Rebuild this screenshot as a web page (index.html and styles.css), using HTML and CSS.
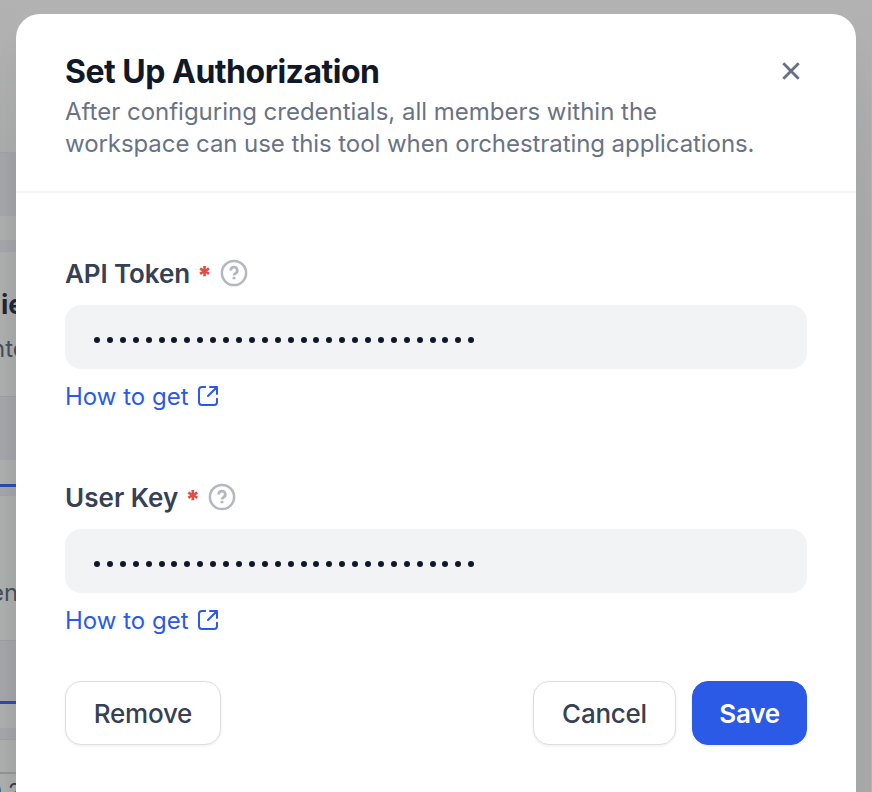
FILE: index.html
```html
<!DOCTYPE html>
<html lang="en">
<head>
<meta charset="utf-8">
<title>Set Up Authorization</title>
<link rel="stylesheet" href="styles.css">
</head>
<body>
<svg class="defs" aria-hidden="true">
  <symbol id="help" viewBox="0 0 28 28"><circle cx="14" cy="14" r="12.1" fill="none" stroke="currentColor" stroke-width="2.5"/><path d="M10.7 11.4a3.3 3.3 0 1 1 4.9 2.9c-1.100.6-1.600 1.100-1.600 2.100" fill="none" stroke="currentColor" stroke-width="2.700"/><rect x="12.6" y="17.8" width="2.8" height="2.5" fill="currentColor"/></symbol>
  <symbol id="external" viewBox="0 0 22 22"><path d="M8.2 2H5A3 3 0 0 0 2 5V17A3 3 0 0 0 5 20H17A3 3 0 0 0 20 17V13.800M13 2H20V9M20 2L11 11" fill="none" stroke="currentColor" stroke-width="2" stroke-linecap="round" stroke-linejoin="round"/></symbol>
</svg>
<div class="page">
  <div class="backdrop">
    <div class="tile head"></div>
    <div class="gap g64"></div>
    <div class="tile t24"></div>
    <div class="gap g11"></div>
    <div class="tile card"><b class="name">ie</b><span class="note">nte</span></div>
    <div class="gap g64"></div>
    <div class="tile t24"></div>
    <div class="rule"></div>
    <div class="gap g8"></div>
    <div class="tile card"><span class="note low">en</span></div>
    <div class="gap g61"></div>
    <div class="rule"></div>
    <div class="tile t24"></div>
    <div class="gap g11"></div>
    <div class="tile last"><span class="count">0 2</span></div>
  </div>
  <main class="modal">
    <header class="header">
      <div class="heading">
        <h1><span>Set Up Authorization</span></h1>
        <p><span class="l1">After configuring credentials, all members within the</span><br><span class="l2">workspace can use this tool when orchestrating applications.</span></p>
      </div>
      <button class="close" aria-label="Close"><svg viewBox="0 0 18 18"><path d="M1.300 1.300L16.700 16.700M16.700 1.300L1.300 16.700" stroke="currentColor" stroke-width="2.800"/></svg></button>
    </header>
    <div class="content">
      <section class="field">
        <div class="label"><span class="api">API Token</span><span class="star">*</span><svg class="help"><use href="#help"/></svg></div>
        <div class="input"><i></i><i></i><i></i><i></i><i></i><i></i><i></i><i></i><i></i><i></i><i></i><i></i><i></i><i></i><i></i><i></i><i></i><i></i><i></i><i></i><i></i><i></i><i></i><i></i><i></i><i></i><i></i><i></i><i></i><i></i></div>
        <a class="link"><span>How to get</span><svg><use href="#external"/></svg></a>
      </section>
      <section class="field">
        <div class="label"><span class="key">User Key</span><span class="star">*</span><svg class="help"><use href="#help"/></svg></div>
        <div class="input"><i></i><i></i><i></i><i></i><i></i><i></i><i></i><i></i><i></i><i></i><i></i><i></i><i></i><i></i><i></i><i></i><i></i><i></i><i></i><i></i><i></i><i></i><i></i><i></i><i></i><i></i><i></i><i></i><i></i><i></i></div>
        <a class="link"><span>How to get</span><svg><use href="#external"/></svg></a>
      </section>
      <footer class="actions">
        <button class="btn remove">Remove</button>
        <button class="btn cancel">Cancel</button>
        <button class="btn save">Save</button>
      </footer>
    </div>
  </main>
</div>
</body>
</html>
```
FILE: styles.css
```css
* { box-sizing: border-box; }
body { margin: 0; font-family: Inter, "Liberation Sans", sans-serif; overflow: hidden; }
.defs { display: none; }
.page { position: relative; width: 872px; height: 792px; overflow: hidden; background: linear-gradient(#b2b2b2 0, #b1b1b1 50px, #abacad 130px, #a8aaa9 240px, #a8aaa9 100%); border-right: 1px solid #b3b2b1; }
.backdrop { width: 16px; height: 792px; overflow: hidden; display: flex; flex-direction: column; }
.backdrop > * { flex: none; }
.tile { background: linear-gradient(90deg, #adaeae, #a5a7a6); white-space: nowrap; }
.head { height: 153px; background: linear-gradient(#b2b2b2 0, #b0b0b0 50px, #a9aaaa 152px); border-bottom: 1px solid #9fa0a2; }
.gap { background: linear-gradient(90deg, #a4a6ab, #9d9fa2); }
.g64 { height: 63px; }
.g61 { height: 60px; }
.g11 { height: 11px; }
.g8 { height: 8px; }
.t24 { height: 24px; }
.rule { height: 3px; background: #294ab0; }
.card { height: 146px; border-top: 1px solid #a0a1a3; border-bottom: 1px solid #9b9c9e; display: flex; flex-direction: column; }
.name { font-size: 27px; line-height: 32px; margin: 37px 0 0 1px; color: #1f2634; }
.note { font-size: 24px; line-height: 30px; margin: 13px 0 0 -9px; color: #474d5b; }
.note.low { margin: 82px 0 0 -10px; }
.last { height: 60px; border-top: 1px solid #9c9d9f; padding-top: 32px; }
.count { display: block; border-top: 2px solid #929394; font-size: 22px; line-height: 34px; color: #373d48; text-indent: -12px; }
.modal { position: absolute; left: 16px; top: 14px; width: 840px; height: 800px; background: #fff; border-radius: 24px; box-shadow: 0 20px 30px rgba(20, 30, 30, .03); }
.header { height: 179px; padding: 38px 49px 0; border-bottom: 2px solid #f3f4f5; display: flex; justify-content: space-between; }
h1 { margin: 0; font-size: 32px; line-height: 40px; font-weight: 650; letter-spacing: -.5px; color: #111828; white-space: nowrap; }
p { margin: 4px 0 0; font-size: 24px; line-height: 32px; color: #697385; white-space: nowrap; }
.l1 { letter-spacing: -.01px; }
.l2 { letter-spacing: -.07px; }
.close { border: 0; padding: 0; margin: 10px 7px 0 0; width: 18px; height: 18px; background: none; color: #667085; }
.close svg { display: block; width: 18px; height: 18px; }
.content { padding: 0 49px; }
.field { height: 224px; padding-top: 64px; }
.label { height: 32px; display: flex; align-items: center; font-size: 26px; font-weight: 600; line-height: 32px; color: #364153; }
.label span { padding-top: 2px; }
.api { letter-spacing: -.1px; }
.key { letter-spacing: .03px; }
.label .star { margin-left: 7px; width: 13px; padding-top: 4px; font-size: 25px; font-weight: 900; color: #de4d46; }
.help { width: 28px; height: 28px; margin-left: 10px; color: #b5b7be; }
.input { height: 64px; margin-top: 16px; padding: 5px 0 0 29px; display: flex; align-items: center; gap: 6.920px; background: #f1f3f5; border-radius: 16px; }
.input i { width: 6px; height: 6px; border-radius: 50%; background: #101828; }
.link { display: flex; align-items: center; margin-top: 12px; height: 32px; font-size: 24px; line-height: 32px; color: #2b5ae7; }
.link svg { width: 22px; height: 22px; margin: 0 0 2px 8px; }
.actions { margin-top: 40px; display: flex; }
.btn { height: 64px; padding: 2px 0 0; border: 1px solid #dcdee1; border-radius: 16px; background: #fff; color: #364153; font: 500 26px/60px Inter, sans-serif; letter-spacing: -.25px; box-shadow: 0 1px 3px rgba(16, 24, 40, .08); }
.remove { width: 156px; margin-right: auto; }
.cancel { width: 143px; }
.save { width: 115px; margin-left: 16px; background: #2b5ae7; border-color: #2b5ae7; color: #fff; font-weight: 600; }
```
